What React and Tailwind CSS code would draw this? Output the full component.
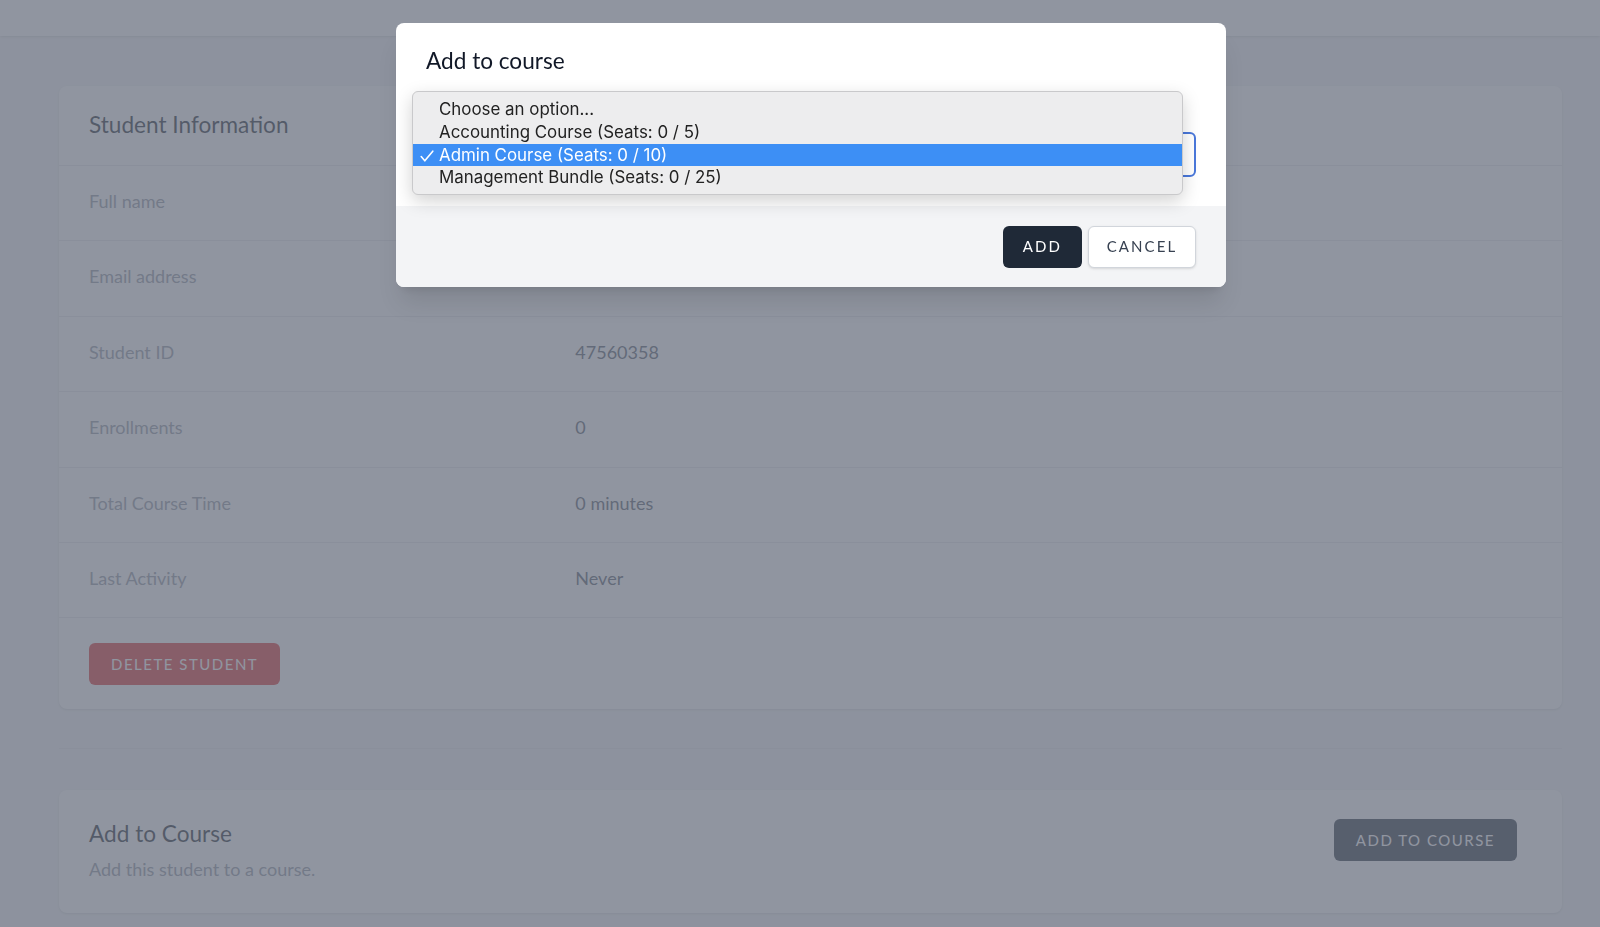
import React from "react";

const rows = [
  ["Full name", "Jordan Smith"],
  ["Email address", "jordan.smith@example.com"],
  ["Student ID", "47560358"],
  ["Enrollments", "0"],
  ["Total Course Time", "0 minutes"],
  ["Last Activity", "Never"],
];

const options = [
  "Choose an option...",
  "Accounting Course (Seats: 0 / 5)",
  "Admin Course (Seats: 0 / 10)",
  "Management Bundle (Seats: 0 / 25)",
];

export default function App() {
  return (
    <div className="relative h-[927px] overflow-hidden bg-[#f3f4f6] font-['Lato','Noto_Sans',sans-serif]">
      <div className="h-[36px] bg-white shadow-sm" />
      <main className="pl-[59px] pr-[38px] pt-[50px]">
        <section className="rounded-lg bg-white shadow">
          <div className="px-[30px] pt-[23px] pb-[24px]">
            <h2 className="text-[22.6px] leading-8 text-[#111827]">Student Information</h2>
          </div>
          {rows.map(([label, value]) => (
            <div
              key={label}
              className="grid grid-cols-3 gap-4 border-t border-[#e5e7eb] px-[30px] pt-[21px] pb-[25.4px] text-lg leading-7"
            >
              <div className="text-[#8c929e]">{label}</div>
              <div className="col-span-2 text-[#4b5563]">{value}</div>
            </div>
          ))}
          <div className="border-t border-[#e5e7eb] px-[30px] pt-[25px] pb-[24px]">
            <button className="h-[42px] rounded-md bg-[#dc2626] px-[22px] text-[15px] uppercase tracking-[0.1em] text-white">
              Delete student
            </button>
          </div>
        </section>

        <div className="pt-[39px] pb-[41px]">
          <div className="border-t border-[#e5e7eb]" />
        </div>

        <section className="flex items-start justify-between rounded-lg bg-white px-[30px] pt-[28px] pb-[30px] shadow">
          <div>
            <h3 className="text-[22.6px] leading-8 text-[#111827]">Add to Course</h3>
            <p className="mt-[5px] text-lg leading-7 text-[#8c929e]">Add this student to a course.</p>
          </div>
          <button className="mt-[1px] mr-[15px] h-[42px] rounded-md bg-[#1f2937] px-[22px] text-[15px] uppercase tracking-[0.1em] text-white">
            Add to course
          </button>
        </section>
      </main>

      <div className="fixed inset-0 bg-[#6b7280]/75" />

      <div className="absolute left-[396px] top-[23px] w-[830px] overflow-visible rounded-lg bg-white shadow-xl">
        <div className="px-[30px] pt-[24px] pb-[29px]">
          <h3 className="text-[22.6px] leading-7 text-[#111827]">Add to course</h3>
          <div className="mt-[57px] h-[45px] rounded-md border-2 border-[#4a78db] bg-white" />
        </div>
        <div className="flex justify-end gap-[6px] rounded-b-lg bg-[#f3f4f6] px-[30px] py-[19.5px]">
          <button className="h-[42px] w-[79px] rounded-md bg-[#1f2937] text-[15px] uppercase tracking-[0.14em] text-white">
            Add
          </button>
          <button className="h-[42px] w-[108px] rounded-md border border-[#d1d5db] bg-white text-[15px] uppercase tracking-[0.14em] text-[#374151] shadow-sm">
            Cancel
          </button>
        </div>

        <div className="absolute left-[16px] top-[68px] w-[771px] rounded-md border border-[#c9c9cb] bg-[#ededee] pt-[6px] pb-[5px] font-['Inter',sans-serif] text-[16.9px] text-[#222222] shadow-[0_6px_18px_rgba(0,0,0,0.18)]">
          {options.map((o, i) => {
            const sel = i === 2;
            return (
              <div
                key={o}
                className={
                  "relative flex h-[22.8px] items-center pl-[26px] leading-none " +
                  (sel ? "bg-[#3d8ff5] text-white" : "")
                }
              >
                {sel && (
                  <svg
                    className="absolute left-[7px] top-[6px]"
                    width="14"
                    height="12"
                    viewBox="0 0 14 12"
                    fill="none"
                    stroke="white"
                    strokeWidth="1.6"
                    strokeLinecap="round"
                    strokeLinejoin="round"
                  >
                    <path d="M1.2 6.6 L4.8 10.8 L12.8 1.2" />
                  </svg>
                )}
                {o}
              </div>
            );
          })}
        </div>
      </div>
    </div>
  );
}
